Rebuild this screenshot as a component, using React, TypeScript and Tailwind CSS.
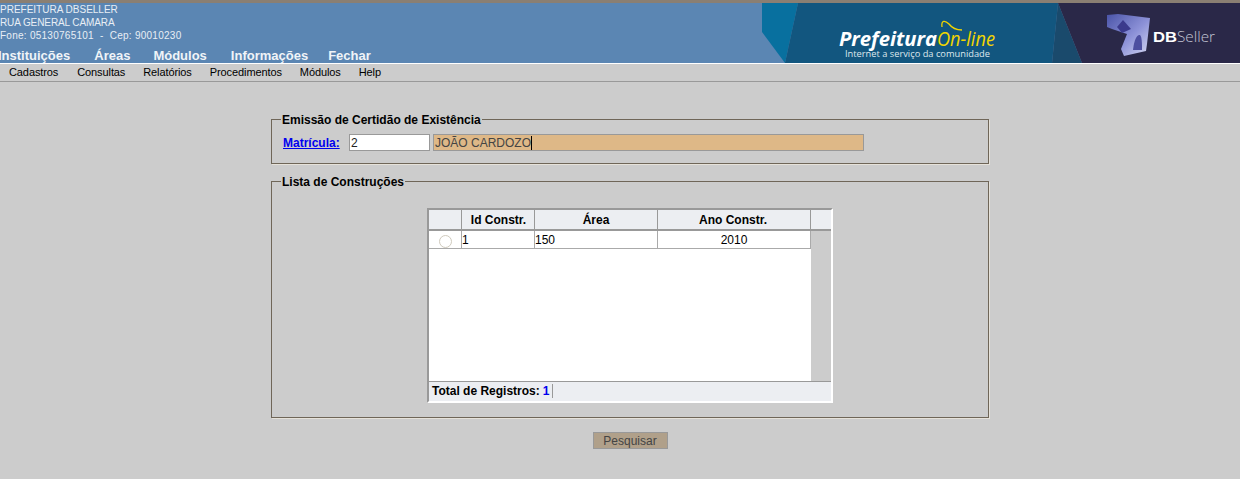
import React from 'react'

const menuLinks = ['Consultas', 'Relatórios', 'Procedimentos', 'Módulos', 'Help']

function Banner() {
  return (
    <svg width="478" height="60" viewBox="762 3 478 60" className="block shrink-0">
      <defs>
        <linearGradient id="mark" x1="0" y1="0" x2="1" y2="1">
          <stop offset="0" stopColor="#4a54a8" />
          <stop offset="0.55" stopColor="#8d92d8" />
          <stop offset="1" stopColor="#d5d8f2" />
        </linearGradient>
      </defs>
      <polygon points="762,3 798,3 785,63 762,32" fill="#08709f" />
      <polygon points="798,3 1058,3 1052,63 785,63" fill="#12567f" />
      <polygon points="1058,3 1082,63 1052,63" fill="#1a4a6c" />
      <polygon points="1058,3 1240,3 1240,63 1082,63" fill="#2a2848" />
      <text x="839" y="46" fontFamily="'Open Sans', sans-serif" fontStyle="italic" fontWeight="700" fontSize="20" fill="#ffffff" textLength="98" lengthAdjust="spacingAndGlyphs">Prefeitura</text>
      <text x="937" y="46" fontFamily="'Open Sans', sans-serif" fontStyle="italic" fontWeight="400" fontSize="20" fill="#f2d500" textLength="58" lengthAdjust="spacingAndGlyphs">On-line</text>
      <path d="M942 27 C941 20 945 20 949 24 C952 28 955 30 962 30" fill="none" stroke="#f2d500" strokeWidth="1.3" />
      <text x="845" y="57" fontFamily="'Open Sans', sans-serif" fontSize="9.5" fill="#dfe8ee" textLength="145" lengthAdjust="spacingAndGlyphs">Internet a serviço da comunidade</text>
      <polygon points="1107,15 1118,14 1150,18 1147,44 1146,51 1124,56 1121,49 1127,34 1112,29 1107,27" fill="url(#mark)" />
      <polygon points="1123,20 1131,29 1122,33 1117,27" fill="#3b3a8c" />
      <path d="M1133 50 C1134 40 1137 34 1140 35 C1142 37 1142 44 1142 50 Z" fill="#4d4fa0" />
      <text x="1153" y="42" fontFamily="'Liberation Sans', sans-serif" fontWeight="700" fontSize="15" fill="#ffffff" textLength="24" lengthAdjust="spacingAndGlyphs">DB</text>
      <text x="1177" y="42" fontFamily="'Open Sans', sans-serif" fontWeight="300" fontSize="15" fill="#c4c6d4" textLength="38" lengthAdjust="spacingAndGlyphs">Seller</text>
    </svg>
  )
}

export default function App() {
  return (
    <div className="min-h-[479px] overflow-hidden bg-[#cccccc] font-['Liberation_Sans',Arial,sans-serif] text-black">
      {/* topo */}
      <div className="h-[3px] bg-[#8a7f73]" />
      <div className="flex h-[60px] justify-between bg-[#5b86b3]">
        <div className="flex flex-col">
          <div className="text-[10px] leading-[13px] text-[#e8eef5]">
            <div>PREFEITURA DBSELLER</div>
            <div className="tracking-[-0.1px]">RUA GENERAL CAMARA</div>
            <div className="whitespace-pre tracking-[0.26px]">Fone: 05130765101  -  Cep: 90010230</div>
          </div>
          <div className="ml-[-2px] mt-[6px] flex text-[13px] font-bold leading-[15px] text-[#f0f4f8]">
            <span>Instituições</span>
            <span className="ml-[24px]">Áreas</span>
            <span className="ml-[23px]">Módulos</span>
            <span className="ml-[24px]">Informações</span>
            <span className="ml-[20px]">Fechar</span>
          </div>
        </div>
        <Banner />
      </div>
      <div className="h-px bg-white" />
      <div className="flex h-[17px] items-center gap-[18px] pl-[9px] text-[11px] tracking-[-0.1px]">
        <span className="mr-px">Cadastros</span>
        {menuLinks.map(l => (
          <span key={l}>{l}</span>
        ))}
      </div>
      <div className="h-px bg-[#999999]" />

      <div className="ml-[271px] mt-[28px] w-[718px]">
        {/* Emissão */}
        <fieldset className="h-[54px] border border-[#6f6658] pl-[7px] shadow-[1px_1px_0_#e6e2da]">
          <legend className="ml-[2px] px-[1px] pt-[2px] text-[12px] font-bold leading-[16px]">Emissão de Certidão de Existência</legend>
          <div className="mt-[5px] flex items-center pl-[4px]">
            <span className="mt-px w-[66px] text-[12px] font-bold text-[#0000ee] underline">Matrícula:</span>
            <div className="flex h-[17px] w-[81px] items-center border border-[#999999] bg-white px-[1px] pt-px text-[12px] text-[#222222]">2</div>
            <div className="ml-[3px] flex h-[17px] w-[431px] items-center border border-[#999999] bg-[#deb887] px-[1px] pt-px text-[12px] text-[#444444]">
              <span>JOÃO CARDOZO</span>
              <span className="h-[14px] w-px bg-black" />
            </div>
          </div>
        </fieldset>

        {/* Lista */}
        <fieldset className="mt-[8px] h-[246px] border border-[#6f6658] pl-[7px] shadow-[1px_1px_0_#e6e2da]">
          <legend className="ml-[2px] px-[1px] pt-[2px] text-[12px] font-bold leading-[16px]">Lista de Construções</legend>
          <div className="ml-[148px] mt-[18px] w-[406px] border-2 border-t-[#999999] border-l-[#999999] border-r-white border-b-white bg-white text-[12px]">
            <div className="flex h-[21px] border-b-2 border-[#999999] bg-[#eceef2] text-center font-bold leading-[21px]">
              <div className="w-[33px] border-r border-[#999999]" />
              <div className="w-[73px] border-r border-[#999999] pl-px">Id Constr.</div>
              <div className="w-[123px] border-r border-[#999999]">Área</div>
              <div className="w-[153px] border-r border-[#999999] pr-[2px]">Ano Constr.</div>
              <div className="w-[20px]" />
            </div>
            <div className="flex h-[150px]">
              <div className="w-[382px]">
                <div className="flex h-[18px] border-b border-[#aaaaaa] leading-[19px]">
                  <div className="flex w-[33px] items-center justify-end border-r border-[#aaaaaa] pr-[9px]">
                    <span className="mt-[3px] h-[13px] w-[13px] rounded-full border border-[#cfcabd] bg-white" />
                  </div>
                  <div className="w-[73px] border-r border-[#aaaaaa]">1</div>
                  <div className="w-[123px] border-r border-[#aaaaaa]">150</div>
                  <div className="w-[153px] border-r border-[#aaaaaa] text-center">2010</div>
                </div>
              </div>
              <div className="w-[20px] bg-[#cccccc]" />
            </div>
            <div className="flex h-[20px] border-t border-[#999999] bg-[#eceef2] pl-[3px] font-bold leading-[18px]">
              <span>Total de Registros:</span>
              <span className="ml-[3px] text-[#0000ee]">1</span>
              <span className="ml-[3px] mt-[2px] h-[14px] w-px bg-[#999999]" />
            </div>
          </div>
        </fieldset>

        <div className="mt-[14px] flex justify-center">
          <button className="h-[17px] w-[75px] border border-[#999999] bg-[#b0a08a] text-[12px] leading-[14px] text-[#444444]">Pesquisar</button>
        </div>
      </div>
    </div>
  )
}
